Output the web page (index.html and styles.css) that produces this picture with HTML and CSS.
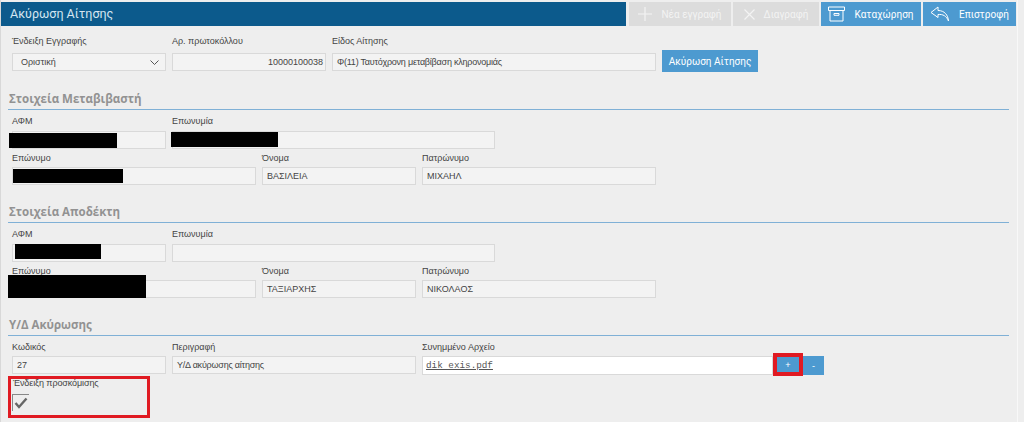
FILE: index.html
```html
<!DOCTYPE html>
<html lang="el">
<head>
    <meta charset="UTF-8">
    <title>Ακύρωση Αίτησης</title>
    <link rel="stylesheet" href="styles.css">
</head>
<body>

<div class="app">
    <header class="top-bar">
        <h1 class="page-title">Ακύρωση Αίτησης</h1>
        <button class="tool-btn disabled w-new">
            <svg width="14" height="14" viewBox="0 0 14 14"><path d="M7 0v14M0 7h14" stroke="#f3f3f3" stroke-width="1.2" fill="none"/></svg>
            Νέα εγγραφή
        </button>
        <button class="tool-btn disabled w-del">
            <svg width="11" height="11" viewBox="0 0 11 11"><path d="M.5.500l10 10M10.500.500l-10 10" stroke="#f3f3f3" stroke-width="1.2" fill="none"/></svg>
            Διαγραφή
        </button>
        <button class="tool-btn w-save">
            <svg width="17" height="16" viewBox="0 0 17 16"><path d="M.5 1h16v3.500H.5zM2 4.500h13V15H2zM6 7.500h5v1.800H6z" stroke="#fff" stroke-width="1" fill="none"/></svg>
            Καταχώρηση
        </button>
        <button class="tool-btn w-back">
            <svg width="20" height="16" viewBox="0 0 20 16"><path d="M8 1L1 6.500 8 11.500V8.500C13 8 16.500 10 18.500 15 18 9 14.500 4.500 8 4.500z" stroke="#fff" stroke-width="1" fill="none" stroke-linejoin="round"/></svg>
            Επιστροφή
        </button>
    </header>

    <main class="content">
        <div class="row row-first">
            <div class="field w-154">
                <label>Ένδειξη Εγγραφής</label>
                <div class="input select">Οριστική
                    <svg width="9" height="5" viewBox="0 0 9 5"><path d="M.5.500l4 4 4-4" stroke="#555" fill="none"/></svg>
                </div>
            </div>
            <div class="field w-154">
                <label>Αρ. πρωτοκόλλου</label>
                <div class="input right">10000100038</div>
            </div>
            <div class="field w-324">
                <label>Είδος Αίτησης</label>
                <div class="input tight">Φ(11) Ταυτόχρονη μεταβίβαση κληρονομιάς</div>
            </div>
            <button class="cancel-btn">Ακύρωση Αίτησης</button>
        </div>

        <section class="block">
            <h2 class="block-title">Στοιχεία Μεταβιβαστή</h2>
            <div class="row row-top">
                <div class="field w-154">
                    <label>ΑΦΜ</label>
                    <div class="input"><span class="redact r-afm1"></span></div>
                </div>
                <div class="field w-323">
                    <label>Επωνυμία</label>
                    <div class="input"><span class="redact r-name1"></span></div>
                </div>
            </div>
            <div class="row">
                <div class="field w-244">
                    <label>Επώνυμο</label>
                    <div class="input"><span class="redact r-sur1"></span></div>
                </div>
                <div class="field w-154">
                    <label>Όνομα</label>
                    <div class="input">ΒΑΣΙΛΕΙΑ</div>
                </div>
                <div class="field w-233">
                    <label>Πατρώνυμο</label>
                    <div class="input">ΜΙΧΑΗΛ</div>
                </div>
            </div>
        </section>

        <section class="block">
            <h2 class="block-title">Στοιχεία Αποδέκτη</h2>
            <div class="row row-top">
                <div class="field w-154">
                    <label>ΑΦΜ</label>
                    <div class="input"><span class="redact r-afm2"></span></div>
                </div>
                <div class="field w-323">
                    <label>Επωνυμία</label>
                    <div class="input"></div>
                </div>
            </div>
            <div class="row">
                <div class="field w-244">
                    <label>Επώνυμο</label>
                    <div class="input"><span class="redact r-sur2"></span></div>
                </div>
                <div class="field w-154">
                    <label>Όνομα</label>
                    <div class="input">ΤΑΞΙΑΡΧΗΣ</div>
                </div>
                <div class="field w-233">
                    <label>Πατρώνυμο</label>
                    <div class="input">ΝΙΚΟΛΑΟΣ</div>
                </div>
            </div>
        </section>

        <section class="block">
            <h2 class="block-title">Υ/Δ Ακύρωσης</h2>
            <div class="row">
                <div class="field w-154">
                    <label>Κωδικός</label>
                    <div class="input">27</div>
                </div>
                <div class="field w-244">
                    <label>Περιγραφή</label>
                    <div class="input tight">Υ/Δ ακύρωσης αίτησης</div>
                </div>
                <div class="field w-351">
                    <label>Συνημμένο Αρχείο</label>
                    <div class="input file"><a href="#">dik exis.pdf</a></div>
                </div>
                <div class="file-btns">
                    <button class="small-btn plus">+</button>
                    <button class="small-btn minus">-</button>
                </div>
            </div>
            <div class="check-field">
                <label>Ένδειξη προσκόμισης</label>
                <div class="checkbox">
                    <svg width="14" height="12" viewBox="0 0 14 12"><path d="M1.500 6l3.500 4L12.500 1.500" stroke="#666" stroke-width="2.400" fill="none"/></svg>
                </div>
            </div>
        </section>
    </main>
</div>

</body>
</html>
```

FILE: styles.css
```css
* {
    box-sizing: border-box;
}
html, body {
    height: 100%;
}
body {
    margin: 0;
    overflow: hidden;
    background-color: #eeeeee;
    color: #444;
    font-family: 'Liberation Sans', Arial, sans-serif;
    font-size: 9px;
}
.app {
    width: 1018px;
    height: 422px;
    padding: 2px 1px 0 1px;
    border-left: 1px solid #d8d8d8;
    border-right: 1px solid #f8f8f8;
}
.top-bar {
    display: flex;
    height: 24px;
    gap: 2px;
}
.page-title {
    flex: 1;
    margin: 0 1px 0 -1px;
    padding-left: 9px;
    background-color: #0c5a8c;
    color: #d5e6f1;
    font-family: 'Roboto', sans-serif;
    font-size: 12.5px;
    font-weight: 400;
    line-height: 24px;
}
.tool-btn {
    display: flex;
    align-items: center;
    justify-content: center;
    gap: 9px;
    padding: 0;
    border: none;
    background-color: #4d9ad0;
    color: #fff;
    font-family: 'Roboto', sans-serif;
    font-size: 10px;
}
.tool-btn.disabled {
    background-color: #dcdcdc;
    color: #f3f3f3;
}
.w-new { width: 102px; }
.w-del { width: 86px; }
.w-save { width: 100px; }
.w-back { width: 93px; }

.content {
    padding: 0 0 0 10px;
}
.row {
    display: flex;
    gap: 6px;
    margin-bottom: 2px;
}
.row-first {
    margin-top: 8px;
}
.field label, .check-field label {
    display: block;
    color: #444;
    line-height: 14px;
    white-space: nowrap;
}
.field label {
    height: 16px;
}
.row-first .field label {
    height: 19px;
}
.row-top .field label {
    height: 17px;
}
.w-154 { width: 154px; }
.w-233 { width: 234px; }
.w-244 { width: 244px; }
.w-323 { width: 323px; }
.w-324 { width: 324px; }
.w-351 { width: 351px; }

.input {
    position: relative;
    display: flex;
    align-items: center;
    height: 18px;
    padding: 0 4px;
    border: 1px solid #d9d9d9;
    background-color: #f3f3f3;
    color: #444;
}
.input.tight {
    letter-spacing: -0.22px;
}
.input.right {
    justify-content: flex-end;
    padding-right: 2px;
}
.input.select {
    justify-content: space-between;
    padding: 0 6px 0 8px;
}
.input.file {
    height: 19px;
    padding: 0 3px;
    background-color: #fff;
}
.input.file a {
    color: #555;
    font-family: 'Liberation Mono', monospace;
    font-size: 9.3px;
}
/* cover blocks on the personal data */
.redact {
    position: absolute;
    background-color: #000;
}
.r-afm1 { left: -4px; top: 1px; width: 108px; height: 15px; }
.r-name1 { left: -2px; top: 0; width: 107px; height: 15px; }
.r-sur1 { left: 0; top: 1px; width: 110px; height: 14px; }
.r-afm2 { left: 2px; top: -1px; width: 86px; height: 15px; }
.r-sur2 { left: -5px; top: -6px; width: 138px; height: 23px; }

.cancel-btn {
    align-self: flex-end;
    width: 96px;
    height: 22px;
    margin-bottom: -1px;
    padding: 0;
    border: none;
    background-color: #4d9ad0;
    color: #fff;
    font-family: 'Roboto', sans-serif;
    font-size: 10px;
}

.block {
    margin-top: 19px;
}
.row-first + .block {
    margin-top: 20px;
}
.block-title {
    width: 1001px;
    height: 19px;
    margin: 0 0 4px -4px;
    padding-left: 1px;
    border-bottom: 1px solid #7fb0d6;
    color: #929292;
    font-family: 'Open Sans', sans-serif;
    font-size: 11.5px;
    font-weight: 700;
    line-height: 16px;
}
.file-btns {
    display: flex;
    align-items: flex-end;
    align-self: flex-end;
    margin-left: -6px;
}
.small-btn {
    height: 19px;
    padding: 0;
    border: none;
    background-color: #4d9ad0;
    color: #fff;
    font-size: 9px;
}
/* the red boxes are part of the picture */
.small-btn.plus {
    width: 30px;
    height: 23px;
    margin-bottom: -1px;
    border: 4px solid #e01a22;
}
.small-btn.minus {
    width: 21px;
}
.check-field {
    width: 142px;
    height: 42px;
    margin: -1px 0 0 -4px;
    padding: 0 1px;
    border: 3px solid #e01a22;
}
.check-field label {
    height: 15px;
    padding-left: 1px;
    line-height: 9px;
    letter-spacing: -0.1px;
}
.checkbox {
    display: flex;
    align-items: center;
    justify-content: center;
    width: 17px;
    height: 17px;
    border-top: 1px solid #888;
    border-left: 1px solid #888;
}
```
